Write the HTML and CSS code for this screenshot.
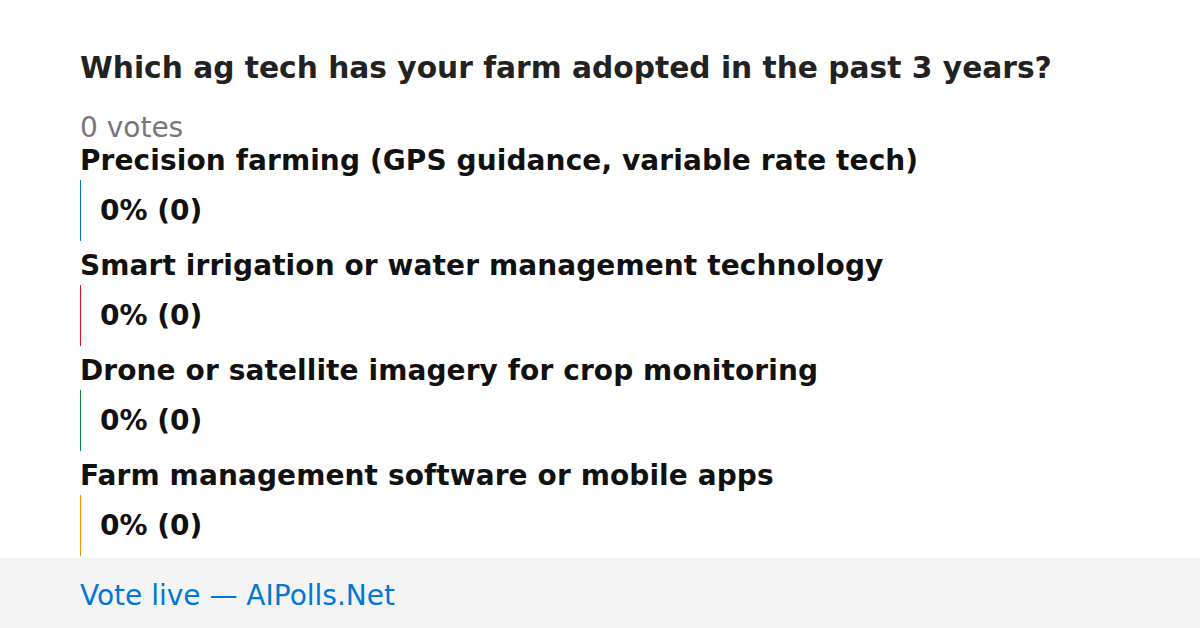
FILE: index.html
```html
<!DOCTYPE html>
<html lang="en">
<head>
  <meta charset="UTF-8" />
  <meta name="viewport" content="width=device-width, initial-scale=1.0" />
  <title>AIPolls.Net</title>
  <link rel="stylesheet" href="styles.css">
</head>
<body>
  <div class="poll">
    <h1>Which ag tech has your farm adopted in the past 3 years?</h1>
    <div class="votes">0 votes</div>

    <div class="option">
      <div class="label">Precision farming (GPS guidance, variable rate tech)</div>
      <div class="bar blue">0% (0)</div>
    </div>
    <div class="option">
      <div class="label">Smart irrigation or water management technology</div>
      <div class="bar red">0% (0)</div>
    </div>
    <div class="option">
      <div class="label">Drone or satellite imagery for crop monitoring</div>
      <div class="bar green">0% (0)</div>
    </div>
    <div class="option">
      <div class="label">Farm management software or mobile apps</div>
      <div class="bar orange">0% (0)</div>
    </div>
  </div>

  <div class="footer">
    <a href="#">Vote live — AIPolls.Net</a>
  </div>
</body>
</html>
```

FILE: styles.css
```css
body {
  font-family: 'DejaVu Sans', sans-serif;
  margin: 0;
  background-color: #ffffff;
  color: #111;
  width: 1200px;
  height: 628px;
  overflow: hidden;
  display: flex;
  flex-direction: column;
}
.poll {
  flex: 1;
  min-height: 0;
  overflow: hidden;
  padding: 50px 80px 0;
}
h1 {
  margin: 0 0 26px;
  font-size: 29.7px;
  font-weight: bold;
  color: #222;
}
.votes {
  font-size: 28px;
  color: #777;
}
.option {
  margin-bottom: 8px;
}
.option:last-child {
  margin-bottom: 0;
}
.label {
  font-size: 28px;
  font-weight: bold;
  color: #111;
  letter-spacing: 0.1px;
}
.bar {
  margin-top: 3px;
  height: 61px;
  display: flex;
  align-items: center;
  padding-left: 19px;
  border-left: 1px solid #ccc;
  font-size: 28px;
  font-weight: bold;
  color: #111;
}
.bar.blue { border-left-color: #0078d4; }
.bar.red { border-left-color: #e81123; }
.bar.green { border-left-color: #10893e; }
.bar.orange { border-left-color: #ff8c00; }
.footer {
  flex-shrink: 0;
  height: 70px;
  box-sizing: border-box;
  padding: 4px 80px 0;
  background-color: #f4f4f4;
  display: flex;
  align-items: center;
}
.footer a {
  text-decoration: none;
  color: #0078d4;
  font-size: 28px;
}
```
